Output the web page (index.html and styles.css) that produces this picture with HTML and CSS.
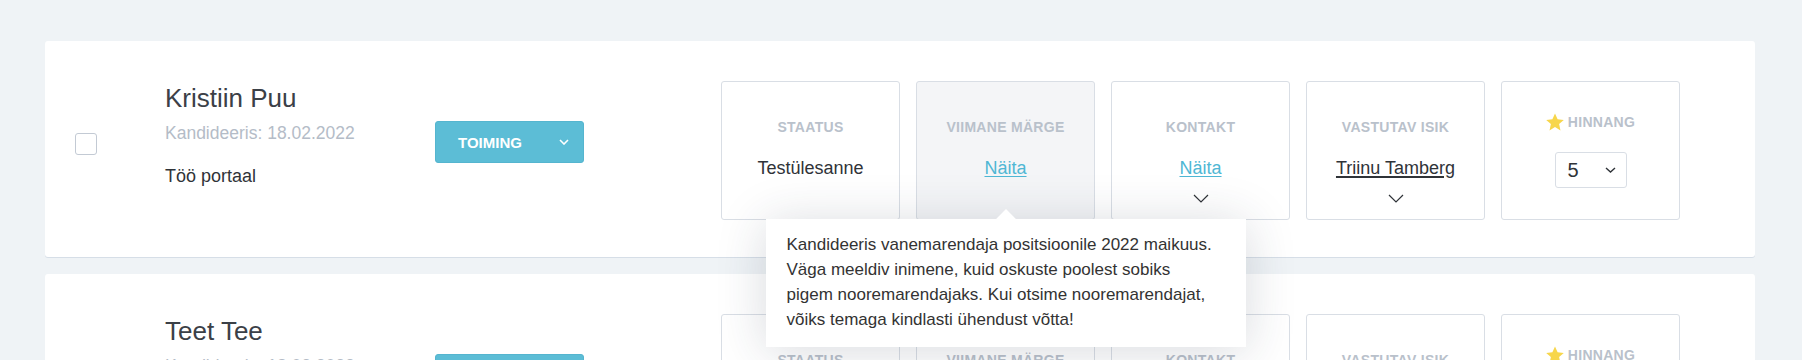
FILE: index.html
```html
<!DOCTYPE html>
<html lang="et">
<head>
  <meta charset="UTF-8">
  <meta name="viewport" content="width=device-width, initial-scale=1.0">
  <title>Kandidaadid</title>
  <link rel="stylesheet" href="styles.css">
</head>
<body>
  <div class="candidate-list">

    <div class="candidate">
      <span class="check"></span>
      <div class="info">
        <div class="name">Kristiin Puu</div>
        <div class="date">Kandideeris: 18.02.2022</div>
        <div class="source">Töö portaal</div>
      </div>
      <button class="action">TOIMING
        <svg width="10" height="6" viewBox="0 0 10 6"><path d="M1 1 L5 5 L9 1" /></svg>
      </button>
      <div class="fields">
        <div class="field">
          <div class="field-label">Staatus</div>
          <div class="field-value">Testülesanne</div>
        </div>
        <div class="field active">
          <div class="field-label">Viimane märge</div>
          <div class="field-value"><a href="#" class="link">Näita</a></div>
          <div class="tooltip">Kandideeris vanemarendaja positsioonile 2022 maikuus. Väga meeldiv inimene, kuid oskuste poolest sobiks pigem nooremarendajaks. Kui otsime nooremarendajat, võiks temaga kindlasti ühendust võtta!</div>
        </div>
        <div class="field">
          <div class="field-label">Kontakt</div>
          <div class="field-value"><a href="#" class="link">Näita</a></div>
          <svg class="chevron" width="16" height="9" viewBox="0 0 16 9"><path d="M1 1 L8 8 L15 1" /></svg>
        </div>
        <div class="field">
          <div class="field-label">Vastutav isik</div>
          <div class="field-value"><span class="person">Triinu Tamberg</span></div>
          <svg class="chevron" width="16" height="9" viewBox="0 0 16 9"><path d="M1 1 L8 8 L15 1" /></svg>
        </div>
        <div class="field field-rating">
          <div class="field-label">
            <svg class="star" width="18" height="18" viewBox="0 0 18 18"><polygon points="9,0.5 11.6,6.3 17.8,6.9 13.1,11.1 14.5,17.4 9,14.1 3.5,17.4 4.9,11.1 0.2,6.9 6.4,6.3" /></svg>
            Hinnang
          </div>
          <div class="select">5
            <svg width="11" height="6" viewBox="0 0 11 6"><path d="M1 1 L5.5 5 L10 1" /></svg>
          </div>
        </div>
      </div>
    </div>

    <div class="candidate">
      <span class="check"></span>
      <div class="info">
        <div class="name">Teet Tee</div>
        <div class="date">Kandideeris: 18.02.2022</div>
        <div class="source">Töö portaal</div>
      </div>
      <button class="action">TOIMING
        <svg width="10" height="6" viewBox="0 0 10 6"><path d="M1 1 L5 5 L9 1" /></svg>
      </button>
      <div class="fields">
        <div class="field">
          <div class="field-label">Staatus</div>
          <div class="field-value">Intervjuu</div>
        </div>
        <div class="field">
          <div class="field-label">Viimane märge</div>
          <div class="field-value"><a href="#" class="link">Näita</a></div>
        </div>
        <div class="field">
          <div class="field-label">Kontakt</div>
          <div class="field-value"><a href="#" class="link">Näita</a></div>
        </div>
        <div class="field">
          <div class="field-label">Vastutav isik</div>
          <div class="field-value"><span class="person">Triinu Tamberg</span></div>
        </div>
        <div class="field field-rating">
          <div class="field-label">
            <svg class="star" width="18" height="18" viewBox="0 0 18 18"><polygon points="9,0.5 11.6,6.3 17.8,6.9 13.1,11.1 14.5,17.4 9,14.1 3.5,17.4 4.9,11.1 0.2,6.9 6.4,6.3" /></svg>
            Hinnang
          </div>
          <div class="select">4
            <svg width="11" height="6" viewBox="0 0 11 6"><path d="M1 1 L5.5 5 L10 1" /></svg>
          </div>
        </div>
      </div>
    </div>

  </div>
</body>
</html>
```

FILE: styles.css
```css
body {
  font-family: "Liberation Sans", Arial, sans-serif;
  background-color: #eff3f6;
  color: #2f3338;
  margin: 0;
  padding: 41px 47px 0 45px;
  height: 360px;
  box-sizing: border-box;
  overflow: hidden;
}
.candidate {
  display: flex;
  align-items: flex-start;
  height: 216px;
  padding: 0 75px 0 30px;
  margin-bottom: 17px;
  background: #fff;
  border-radius: 3px;
  box-shadow: 0 1px 0 #d6dee7;
}
.check {
  width: 22px;
  height: 22px;
  margin-top: 92px;
  box-sizing: border-box;
  border: 1px solid #c3cad4;
  border-radius: 3px;
  flex-shrink: 0;
}
.info {
  width: 270px;
  margin-left: 68px;
  padding-top: 42px;
}
.name {
  font-size: 26px;
  line-height: 30px;
  color: #3b4047;
}
.date {
  margin-top: 9px;
  font-size: 17.5px;
  line-height: 22px;
  color: #b4bcc7;
}
.source {
  margin-top: 21px;
  font-size: 18px;
  line-height: 22px;
  color: #2f3338;
}
.action {
  display: flex;
  align-items: center;
  justify-content: space-between;
  width: 149px;
  height: 42px;
  margin-top: 80px;
  padding: 0 14px 0 22px;
  box-sizing: border-box;
  background-color: #5cbdd6;
  border: 1px solid #55b5cf;
  border-radius: 3px;
  color: #fff;
  font-family: inherit;
  font-size: 15px;
  font-weight: bold;
  cursor: pointer;
}
.action svg path {
  fill: none;
  stroke: #fff;
  stroke-width: 1.6;
}
.fields {
  display: flex;
  gap: 16px;
  margin-left: auto;
  margin-top: 40px;
}
.field {
  position: relative;
  display: flex;
  flex-direction: column;
  align-items: center;
  width: 179px;
  height: 139px;
  box-sizing: border-box;
  padding-top: 36px;
  border: 1px solid #d9dee5;
  border-radius: 3px;
  background: #fff;
}
.field.active {
  background: #f4f5f7;
}
.field-label {
  display: flex;
  align-items: center;
  gap: 4px;
  font-size: 14px;
  line-height: 18px;
  font-weight: bold;
  letter-spacing: 0.3px;
  text-transform: uppercase;
  color: #b9c1cb;
}
.field-value {
  margin-top: 21px;
  font-size: 18px;
  line-height: 22px;
}
.link {
  color: #4fb7d4;
  text-decoration: underline;
  text-underline-offset: 2px;
}
.person {
  text-decoration: underline;
  text-decoration-thickness: 2px;
  text-underline-offset: 2px;
}
.chevron {
  margin-top: 15px;
}
.chevron path {
  fill: none;
  stroke: #2f3338;
  stroke-width: 1.2;
}
.field-rating {
  padding-top: 31px;
}
.star polygon {
  fill: #f7d64b;
}
.select {
  display: flex;
  align-items: center;
  justify-content: space-between;
  width: 72px;
  height: 36px;
  margin-top: 21px;
  padding: 0 10px 0 12px;
  box-sizing: border-box;
  border: 1px solid #d9dee5;
  border-radius: 3px;
  font-size: 20px;
  color: #2f3338;
}
.select svg path {
  fill: none;
  stroke: #2f3338;
  stroke-width: 1.4;
}
.tooltip {
  position: absolute;
  top: 100%;
  left: 50%;
  transform: translateX(-50%);
  z-index: 10;
  width: 480px;
  box-sizing: border-box;
  padding: 13px 29px 15px 21px;
  background: #fff;
  box-shadow: 0 4px 50px rgba(40, 50, 70, 0.18);
  font-size: 17px;
  line-height: 25px;
  color: #333;
}
.tooltip::before {
  content: "";
  position: absolute;
  top: -7px;
  left: 50%;
  width: 14px;
  height: 14px;
  margin-left: -7px;
  background: #fff;
  transform: rotate(45deg);
}
```
